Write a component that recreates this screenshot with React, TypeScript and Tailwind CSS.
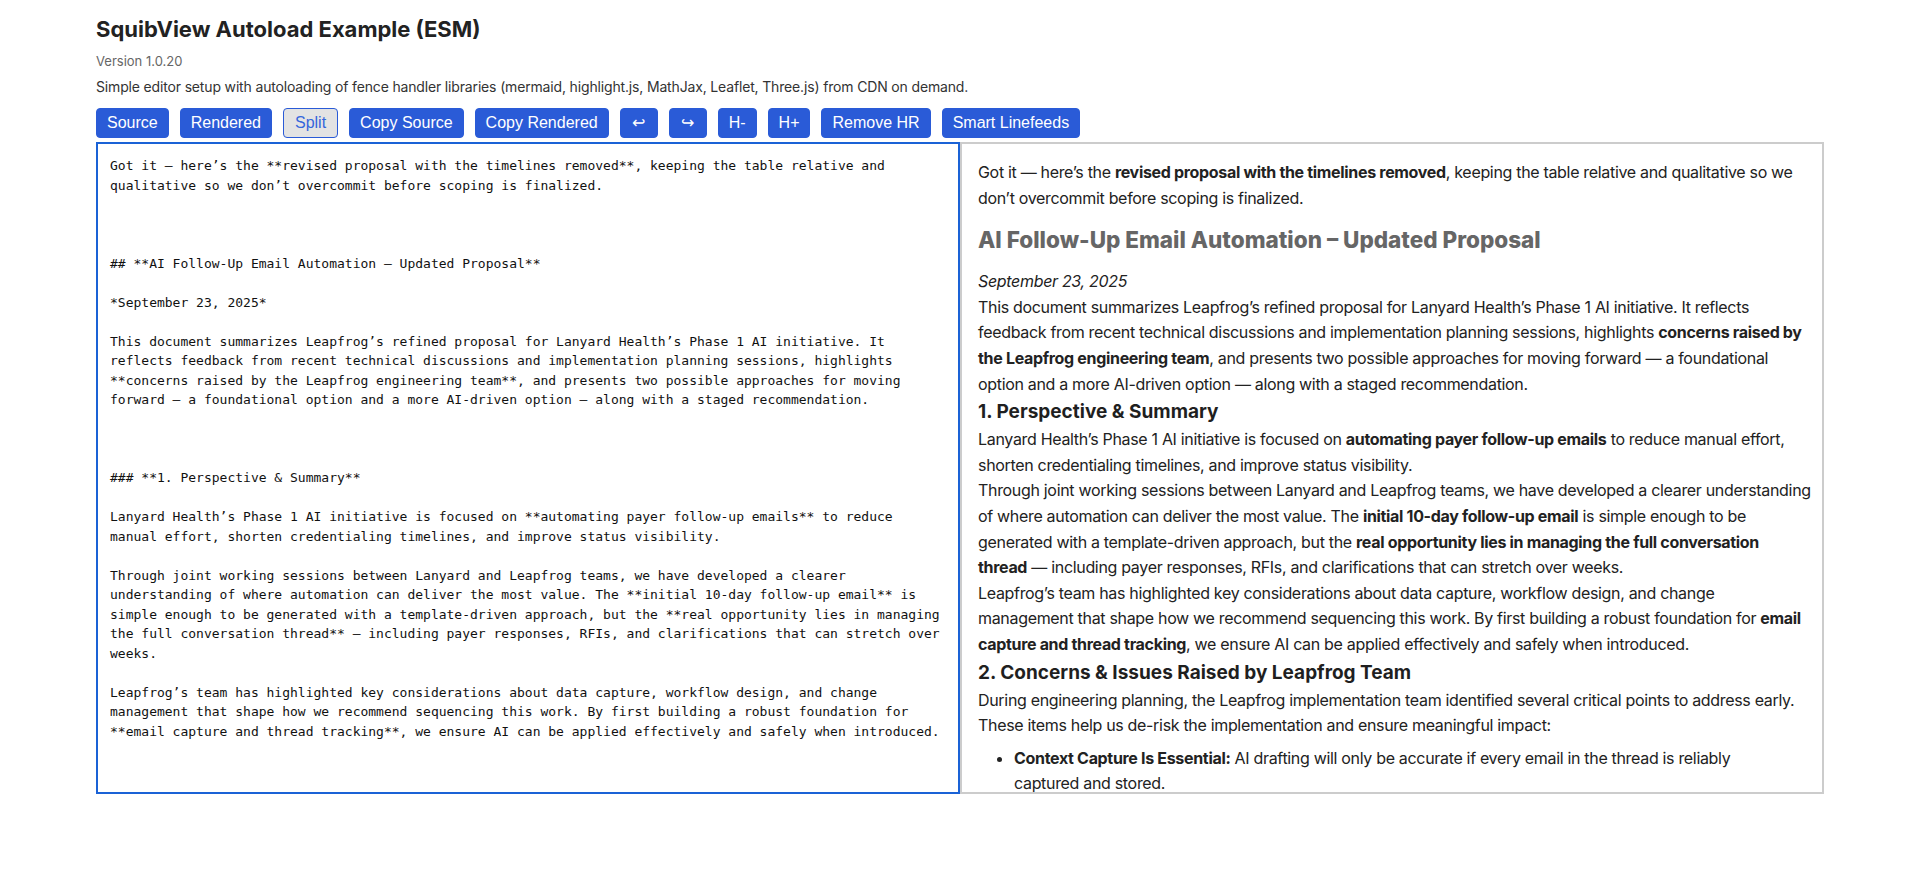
const source = `Got it — here’s the **revised proposal with the timelines removed**, keeping the table relative and qualitative so we don’t overcommit before scoping is finalized.



## **AI Follow-Up Email Automation – Updated Proposal**

*September 23, 2025*

This document summarizes Leapfrog’s refined proposal for Lanyard Health’s Phase 1 AI initiative. It reflects feedback from recent technical discussions and implementation planning sessions, highlights **concerns raised by the Leapfrog engineering team**, and presents two possible approaches for moving forward — a foundational option and a more AI-driven option — along with a staged recommendation.



### **1. Perspective & Summary**

Lanyard Health’s Phase 1 AI initiative is focused on **automating payer follow-up emails** to reduce manual effort, shorten credentialing timelines, and improve status visibility.

Through joint working sessions between Lanyard and Leapfrog teams, we have developed a clearer understanding of where automation can deliver the most value. The **initial 10-day follow-up email** is simple enough to be generated with a template-driven approach, but the **real opportunity lies in managing the full conversation thread** — including payer responses, RFIs, and clarifications that can stretch over weeks.

Leapfrog’s team has highlighted key considerations about data capture, workflow design, and change management that shape how we recommend sequencing this work. By first building a robust foundation for **email capture and thread tracking**, we ensure AI can be applied effectively and safely when introduced.



### **2. Concerns & Issues Raised by Leapfrog Team**
`;

const buttons = [
  'Source',
  'Rendered',
  'Split',
  'Copy Source',
  'Copy Rendered',
  '↩',
  '↪',
  'H-',
  'H+',
  'Remove HR',
  'Smart Linefeeds',
];

function Toolbar() {
  return (
    <div className="flex items-center gap-[11px] mt-[11px]">
      {buttons.map((label) => {
        if (label === 'Split') {
          return (
            <button
              key={label}
              className="h-[30px] px-[11px] rounded-[4px] border border-[#2a5bd7] bg-[#e3e3e3] text-[#3566dc] text-[16px] font-['Liberation_Sans',Arial,sans-serif]"
            >
              {label}
            </button>
          );
        }
        const arrow = label === '↩' || label === '↪';
        return (
          <button
            key={label}
            className={
              arrow
                ? "h-[30px] w-[38px] rounded-[4px] border border-[#2a5bd7] bg-[#2a5bd7] text-white text-[16px] font-['Liberation_Sans',Arial,sans-serif]"
                : "h-[30px] px-[10px] rounded-[4px] border border-[#2a5bd7] bg-[#2a5bd7] text-white text-[16px] font-['Liberation_Sans',Arial,sans-serif]"
            }
          >
            {label}
          </button>
        );
      })}
    </div>
  );
}

function Rendered() {
  return (
    <div className="border-2 border-[#cccccc] pl-[16px] pr-[6px] py-[16px] overflow-hidden text-[16px] leading-[25.6px] tracking-[-0.32px] text-[#222222] font-['Inter',sans-serif]">
      <p>
        Got it — here’s the <strong>revised proposal with the timelines removed</strong>, keeping the table relative
        and qualitative so we
        <br />
        don’t overcommit before scoping is finalized.
      </p>
      <h2 className="my-[15px] text-[22.5px] leading-[28px] font-extrabold tracking-normal text-[#666666]">
        AI Follow-Up Email Automation – Updated Proposal
      </h2>
      <p>
        <em>September 23, 2025</em>
      </p>
      <p>
        This document summarizes Leapfrog’s refined proposal for Lanyard Health’s Phase 1 AI initiative. It reflects
        <br />
        feedback from recent technical discussions and implementation planning sessions, highlights{' '}
        <strong>
          concerns raised by
          <br />
          the Leapfrog engineering team
        </strong>
        , and presents two possible approaches for moving forward — a foundational
        <br />
        option and a more AI-driven option — along with a staged recommendation.
      </p>
      <h3 className="text-[19px] leading-[30px] font-bold tracking-normal text-[#1f1f1f]">
        1. Perspective &amp; Summary
      </h3>
      <p>
        Lanyard Health’s Phase 1 AI initiative is focused on <strong>automating payer follow-up emails</strong> to
        reduce manual effort,
        <br />
        shorten credentialing timelines, and improve status visibility.
      </p>
      <p>
        Through joint working sessions between Lanyard and Leapfrog teams, we have developed a clearer understanding
        <br />
        of where automation can deliver the most value. The <strong>initial 10-day follow-up email</strong> is simple
        enough to be
        <br />
        generated with a template-driven approach, but the{' '}
        <strong>
          real opportunity lies in managing the full conversation
          <br />
          thread
        </strong>{' '}
        — including payer responses, RFIs, and clarifications that can stretch over weeks.
      </p>
      <p>
        Leapfrog’s team has highlighted key considerations about data capture, workflow design, and change
        <br />
        management that shape how we recommend sequencing this work. By first building a robust foundation for{' '}
        <strong>
          email
          <br />
          capture and thread tracking
        </strong>
        , we ensure AI can be applied effectively and safely when introduced.
      </p>
      <h3 className="text-[19px] leading-[30px] font-bold tracking-normal text-[#1f1f1f]">
        2. Concerns &amp; Issues Raised by Leapfrog Team
      </h3>
      <p>
        During engineering planning, the Leapfrog implementation team identified several critical points to address
        early.
        <br />
        These items help us de-risk the implementation and ensure meaningful impact:
      </p>
      <ul className="mt-[7px] pl-9 list-disc">
        <li>
          <strong>Context Capture Is Essential:</strong> AI drafting will only be accurate if every email in the thread
          is reliably
          <br />
          captured and stored.
        </li>
        <li>
          <strong>Thread Tracking Matters:</strong> Payer replies and RFIs need to be linked back to the original
          request.
        </li>
      </ul>
    </div>
  );
}

export default function App() {
  return (
    <div className="min-h-screen bg-white px-[96px] pt-[15px] font-['Inter',sans-serif]">
      <h1 className="text-[22px] leading-[29px] font-bold text-[#222222]">SquibView Autoload Example (ESM)</h1>
      <p className="mt-[9px] text-[13px] leading-[16px] text-[#666666]">Version 1.0.20</p>
      <p className="mt-[8px] text-[14px] leading-[20px] tracking-[-0.16px] text-[#333333]">
        Simple editor setup with autoloading of fence handler libraries (mermaid, highlight.js, MathJax, Leaflet,
        Three.js) from CDN on demand.
      </p>
      <Toolbar />
      <div className="mt-[4px] grid grid-cols-2 h-[652px]">
        <div className="border-2 border-[#1a62d6] p-3 overflow-hidden whitespace-pre-wrap break-words text-[13px] leading-[19.5px] text-[#111111] font-['DejaVu_Sans_Mono',monospace]">
          {source}
        </div>
        <Rendered />
      </div>
    </div>
  );
}
